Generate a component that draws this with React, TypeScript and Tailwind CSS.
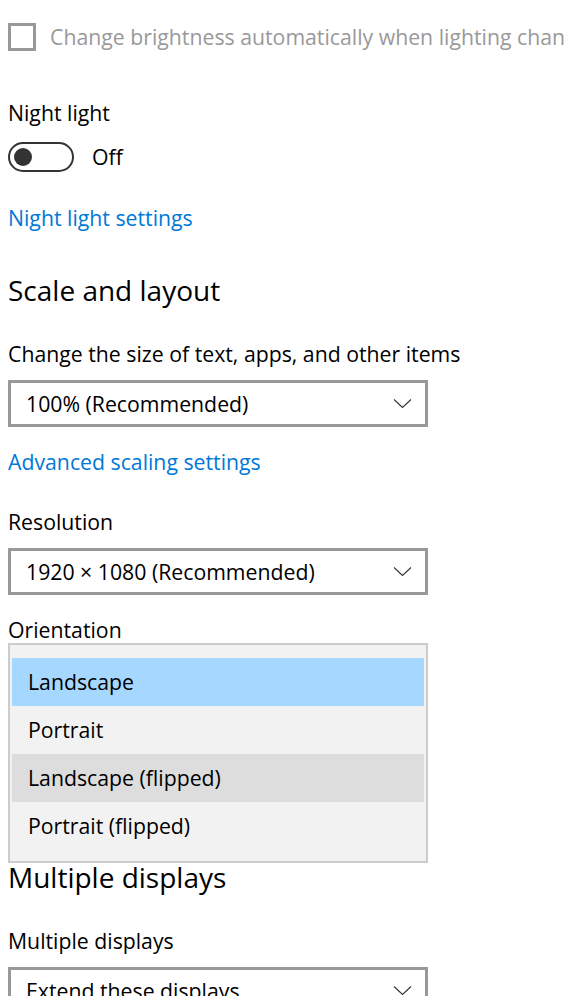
import React from "react";

function Chevron() {
  return (
    <svg width="19" height="11" viewBox="0 0 19 11" className="shrink-0">
      <path d="M1 1.5 L9.5 9.5 L18 1.5" fill="none" stroke="#333" strokeWidth="1.1" />
    </svg>
  );
}

function Select({ value }: { value: string }) {
  return (
    <div className="w-[420px] h-[47px] border-[3px] border-[#999] bg-white flex items-center justify-between pl-[15px] pr-[13px]">
      <span className="text-[21.25px] leading-[28px] text-black whitespace-nowrap">{value}</span>
      <Chevron />
    </div>
  );
}

const Label = ({ children, className = "" }: { children: React.ReactNode; className?: string }) => (
  <div className={`text-[21.25px] leading-[28px] text-black whitespace-nowrap ${className}`}>{children}</div>
);

const LinkText = ({ children, className = "" }: { children: React.ReactNode; className?: string }) => (
  <div className={`text-[21.25px] leading-[28px] text-[#0078d7] whitespace-nowrap ${className}`}>{children}</div>
);

const Heading = ({ children, className = "" }: { children: React.ReactNode; className?: string }) => (
  <div className={`text-[28px] leading-[36px] text-black whitespace-nowrap ${className}`}>{children}</div>
);

export default function App() {
  const options = [
    { label: "Landscape", cls: "bg-[#a6d8ff]" },
    { label: "Portrait", cls: "" },
    { label: "Landscape (flipped)", cls: "bg-[#dddddd]" },
    { label: "Portrait (flipped)", cls: "" },
  ];
  return (
    <div className="w-[564px] h-[996px] overflow-hidden bg-white pl-[8px] font-['Open_Sans',sans-serif] flex flex-col">
      <div className="mt-[23px] flex items-center gap-[14px] h-[28px]">
        <div className="w-[28px] h-[28px] border-[3px] border-[#999] shrink-0" />
        <span className="text-[21.25px] leading-[28px] text-[#999] whitespace-nowrap">
          Change brightness automatically when lighting changes
        </span>
      </div>

      <Label className="mt-[48px]">Night light</Label>

      <div className="mt-[15px] flex items-center h-[30px]">
        <div className="w-[66px] h-[30px] rounded-full border-[2.5px] border-[#333] flex items-center pl-[4px] shrink-0">
          <div className="w-[18px] h-[18px] rounded-full bg-[#333]" />
        </div>
        <span className="ml-[18px] text-[21.25px] leading-[28px] text-black">Off</span>
      </div>

      <LinkText className="mt-[32px]">Night light settings</LinkText>

      <Heading className="mt-[40px]">Scale and layout</Heading>

      <Label className="mt-[32px]">Change the size of text, apps, and other items</Label>
      <div className="mt-[12px]">
        <Select value="100% (Recommended)" />
      </div>

      <LinkText className="mt-[21px]">Advanced scaling settings</LinkText>

      <Label className="mt-[32px]">Resolution</Label>
      <div className="mt-[12px]">
        <Select value="1920 × 1080 (Recommended)" />
      </div>

      <Label className="mt-[21px]">Orientation</Label>
      <div className="relative">
        <Select value="Landscape" />
        <div className="absolute left-0 top-[-1px] w-[420px] h-[220px] border-[2px] border-[#cccccc] bg-[#f2f2f2] pt-[13px] px-[2px] z-10">
          {options.map((o) => (
            <div key={o.label} className={`h-[48px] flex items-center pl-[16px] ${o.cls}`}>
              <span className="text-[21.25px] leading-[28px] text-black whitespace-nowrap">{o.label}</span>
            </div>
          ))}
        </div>
      </div>

      <Heading className="mt-[168px]">Multiple displays</Heading>

      <Label className="mt-[32px]">Multiple displays</Label>
      <div className="mt-[12px]">
        <Select value="Extend these displays" />
      </div>
    </div>
  );
}
